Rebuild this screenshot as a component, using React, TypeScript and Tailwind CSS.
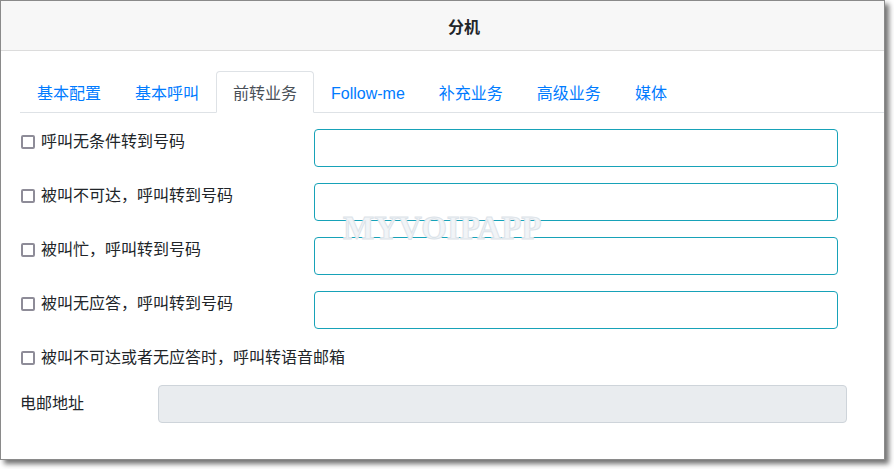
import React from "react";

const tabs = ["基本配置", "基本呼叫", "前转业务", "Follow-me", "补充业务", "高级业务", "媒体"];

const rows = [
  "呼叫无条件转到号码",
  "被叫不可达，呼叫转到号码",
  "被叫忙，呼叫转到号码",
  "被叫无应答，呼叫转到号码",
];

function Check() {
  return (
    <span className="mt-[5px] ml-[1px] mr-[6px] box-border block h-[14px] w-[14px] shrink-0 rounded-[2px] border-2 border-[#8e8c98] bg-white" />
  );
}

export default function App() {
  return (
    <div
      className="relative h-[469px] w-[894px] bg-white text-[#212529]"
      style={{ fontFamily: '"Liberation Sans", "Noto Sans CJK SC", sans-serif' }}
    >
      <div className="relative box-border h-[460px] w-[885px] border border-[#8a8a8a] bg-white shadow-[4px_4px_5px_rgba(0,0,0,0.55)]">
        <div className="box-border h-[50px] border-b border-[#dcdcdc] bg-[#f7f7f7] pl-[447px] pt-[15px] text-[16px] font-bold leading-6 text-[#212529]">
          分机
        </div>

        <div className="ml-[19px] mt-[20px] flex border-b border-[#dee2e6]">
          {tabs.map((t, i) => (
            <div
              key={t}
              className={
                i === 2
                  ? "-mb-px rounded-t-[4px] border border-[#dee2e6] border-b-white bg-white px-4 pt-[10px] pb-[6px] text-[16px] leading-6 text-[#495057]"
                  : "-mb-px border border-transparent px-4 pt-[10px] pb-[6px] text-[16px] leading-6 text-[#007bff]"
              }
            >
              {t}
            </div>
          ))}
        </div>

        <div className="pl-[19px] pt-[16px]">
          {rows.map((r) => (
            <div key={r} className="mb-4 flex h-[38px]">
              <div className="flex w-[294px] items-start pt-[1px]">
                <Check />
                <span className="text-[16px] leading-6">{r}</span>
              </div>
              <div className="box-border h-[38px] w-[524px] rounded-[4px] border border-[#17a2b8]" />
            </div>
          ))}
          <div className="flex h-[40px] items-start pt-[1px]">
            <Check />
            <span className="text-[16px] leading-6">被叫不可达或者无应答时，呼叫转语音邮箱</span>
          </div>
          <div className="flex h-[38px]">
            <div className="w-[138px] pt-[7px] text-[16px] leading-6">电邮地址</div>
            <div className="box-border h-[38px] w-[689px] rounded-[4px] border border-[#ced4da] bg-[#e9ecef]" />
          </div>
        </div>

        <div
          className="pointer-events-none absolute left-[342px] top-[211px] text-[33px] font-bold leading-none text-[#f1f4f7] [-webkit-text-stroke:1px_#dce3e9]"
          style={{ fontFamily: '"Liberation Serif", serif' }}
        >
          MYVOIPAPP
        </div>
      </div>
    </div>
  );
}
